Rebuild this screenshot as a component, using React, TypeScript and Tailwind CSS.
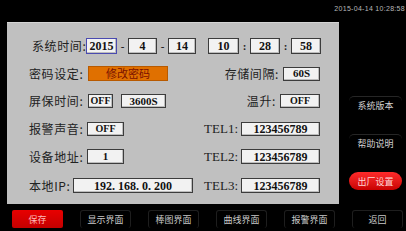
import React from "react";

const cjk = '"Noto Sans CJK SC", "Noto Sans", sans-serif';
const serif = '"Liberation Serif", "Noto Sans CJK SC", serif';

function Box({
  w,
  h = 15,
  text,
  size = "text-[12px]",
  focus = false,
}: {
  w: string;
  h?: number;
  text: string;
  size?: string;
  focus?: boolean;
}) {
  return (
    <div
      className={`${w} ${h === 16 ? "h-[16px]" : h === 14 ? "h-[14px]" : "h-[15px]"} flex items-center justify-center border ${
        focus ? "border-[#4a4ab0]" : "border-[#3c3c3c]"
      } bg-[#f2f2f2] shadow-[inset_-1px_-1px_0_#bdbdbd] ${size} font-bold text-[#111] leading-none whitespace-nowrap`}
      style={{ fontFamily: serif }}
    >
      {text}
    </div>
  );
}

function Label({ text, w, serifFont = false }: { text: string; w?: string; serifFont?: boolean }) {
  return (
    <span
      className={`${w ?? ""} ${serifFont ? "text-[13px]" : "text-[12px] tracking-[0.6px]"} text-[#222] leading-none whitespace-nowrap`}
      style={{ fontFamily: serifFont ? serif : cjk }}
    >
      {text}
    </span>
  );
}

function Sep({ c }: { c: string }) {
  return (
    <span className="w-[11px] text-center text-[11px] font-bold text-[#222] leading-none" style={{ fontFamily: serif }}>
      {c}
    </span>
  );
}

function SideButton({ text, red = false }: { text: string; red?: boolean }) {
  return (
    <div
      className={`h-[18px] w-[53px] flex items-center justify-center text-[9px] leading-none ${
        red
          ? "rounded-[9px] bg-gradient-to-b from-[#ff2a2a] to-[#c80000] text-[#ffd6d6]"
          : "rounded-[5px] border-t border-[#262626] bg-black text-[#d2d2d2]"
      }`}
      style={{ fontFamily: cjk }}
    >
      {text}
    </div>
  );
}

function BottomButton({ text, red = false }: { text: string; red?: boolean }) {
  return (
    <div
      className={`h-[18px] w-[51px] flex items-center justify-center text-[9px] leading-none ${
        red
          ? "rounded-[2px] bg-gradient-to-b from-[#e80000] to-[#c40000] text-[#ffb8b8]"
          : "rounded-[3px] border-t border-x border-[#1e1e1e] bg-black text-[#c8c8c8]"
      }`}
      style={{ fontFamily: cjk }}
    >
      {text}
    </div>
  );
}

export default function App() {
  return (
    <div className="w-[406px] h-[231px] bg-black overflow-hidden flex flex-col">
      <div className="h-[22px] flex justify-end pt-[5px] pr-[1px]">
        <span className="text-[7px] leading-none text-[#b8b8b8] tracking-[0.3px]" style={{ fontFamily: '"Liberation Sans", sans-serif' }}>
          2015-04-14 10:28:58
        </span>
      </div>

      <div className="flex h-[182px]">
        <div className="ml-[7px] w-[332px] h-[182px] bg-[#c0c0c0] border-t border-[#d4d4d4] pt-[9px] flex flex-col">
          {/* row 1: system time */}
          <div className="h-[28px] flex items-center pl-[25px]">
            <Label text="系统时间:" w="w-[54px]" />
            <Box w="w-[31px]" h={16} text="2015" focus />
            <Sep c="-" />
            <Box w="w-[29px]" h={16} text="4" />
            <Sep c="-" />
            <Box w="w-[28px]" h={16} text="14" />
            <div className="w-[12px]" />
            <Box w="w-[31px]" h={16} text="10" />
            <Sep c=":" />
            <Box w="w-[30px]" h={16} text="28" />
            <Sep c=":" />
            <Box w="w-[30px]" h={16} text="58" />
          </div>

          {/* row 2 */}
          <div className="h-[27px] flex items-center pl-[22px] pr-[19px]">
            <Label text="密码设定:" w="w-[59px]" />
            <div
              className="w-[80px] h-[15px] flex items-center justify-center bg-[#e07000] border border-[#b85a00] text-[11px] text-[#7a1000] leading-none"
              style={{ fontFamily: cjk }}
            >
              修改密码
            </div>
            <div className="flex-1 flex items-center justify-end gap-[4px]">
              <Label text="存储间隔:" />
              <Box w="w-[37px]" h={14} text="60S" size="text-[11px]" />
            </div>
          </div>

          {/* row 3 */}
          <div className="h-[28px] flex items-center pl-[22px] pr-[19px]">
            <Label text="屏保时间:" w="w-[59px]" />
            <Box w="w-[25px]" h={14} text="OFF" size="text-[10px]" />
            <div className="w-[8px]" />
            <Box w="w-[45px]" h={14} text="3600S" size="text-[11px]" />
            <div className="flex-1 flex items-center justify-end gap-[4px]">
              <Label text="温升:" />
              <Box w="w-[40px]" h={14} text="OFF" size="text-[10px]" />
            </div>
          </div>

          {/* row 4 */}
          <div className="h-[27px] flex items-center pl-[22px] pr-[19px]">
            <Label text="报警声音:" w="w-[58px]" />
            <Box w="w-[37px]" h={14} text="OFF" size="text-[10px]" />
            <div className="flex-1 flex items-center justify-end gap-[3px]">
              <Label text="TEL1:" serifFont />
              <Box w="w-[79px]" h={14} text="123456789" />
            </div>
          </div>

          {/* row 5 */}
          <div className="h-[29px] flex items-center pl-[22px] pr-[19px]">
            <Label text="设备地址:" w="w-[58px]" />
            <Box w="w-[37px]" text="1" size="text-[11px]" />
            <div className="flex-1 flex items-center justify-end gap-[3px]">
              <Label text="TEL2:" serifFont />
              <Box w="w-[79px]" text="123456789" />
            </div>
          </div>

          {/* row 6 */}
          <div className="h-[29px] flex items-center pl-[22px] pr-[19px]">
            <Label text="本地IP:" w="w-[44px]" />
            <Box w="w-[120px]" text="192. 168. 0. 200" />
            <div className="flex-1 flex items-center justify-end gap-[3px]">
              <Label text="TEL3:" serifFont />
              <Box w="w-[79px]" text="123456789" />
            </div>
          </div>
        </div>

        <div className="ml-[10px] w-[53px] pt-[74px] flex flex-col gap-[20px]">
          <SideButton text="系统版本" />
          <SideButton text="帮助说明" />
          <SideButton text="出厂设置" red />
        </div>
      </div>

      <div className="mt-[6px] pl-[12px] flex gap-[17px]">
        <BottomButton text="保存" red />
        <BottomButton text="显示界面" />
        <BottomButton text="棒图界面" />
        <BottomButton text="曲线界面" />
        <BottomButton text="报警界面" />
        <BottomButton text="返回" />
      </div>
    </div>
  );
}
